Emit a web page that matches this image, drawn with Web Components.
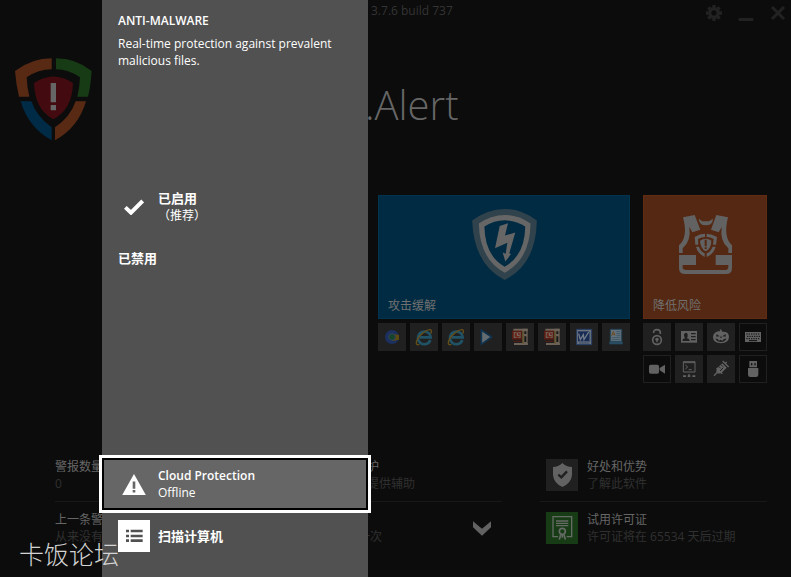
<!DOCTYPE html>
<html lang="zh-CN">
<head>
<meta charset="utf-8">
<meta name="viewport" content="width=device-width, initial-scale=1">
<title>Alert</title>
<style>
html, body { margin: 0; min-height: 100%; background: #0c0c0c; }
body { font: 12px/17px "Open Sans", "Noto Sans CJK SC", sans-serif; color: #646464; }
</style>
</head>
<body>
<alert-app></alert-app>
<script>
const ICONS = {
  logo: ['45 57 231 247', `<path fill="#582a14" d="M45 95Q95 57 155 57V90Q115 90 80 114Q81 145 88 172H57Q48 135 45 95ZM227 186H258Q235 265 165 303V264Q210 235 227 186Z"/><path fill="#173b15" d="M168 57Q228 57 275 95Q272 140 264 172H232Q239 145 240 114Q205 90 168 90Z"/><path fill="#002b46" d="M62 186H94Q110 232 155 264V303Q85 265 62 186Z"/><path fill="#430b10" d="M102 131Q160 92 219 131Q217 210 160 240Q104 210 102 131Z"/><path fill="#666" d="M152 131h16v58h-16zM152 197h16v16h-16z"/>`],
  gear: ['0 0 48 48', `<path fill="none" stroke="#222" stroke-width="10" d="M24 11a13 13 0 1 1-.1 0Z"/><path stroke="#222" stroke-width="10" d="M24 0v9M24 39v9M0 24h9M39 24h9M7 7l6 6M35 35l6 6M41 7l-6 6M13 35l-6 6"/>`],
  minimise: ['0 0 48 48', `<path fill="#222" d="M2 39h44v9H2z"/>`],
  close: ['0 0 48 48', `<path stroke="#222" stroke-width="9" d="M6 6l36 36M42 6L6 42"/>`],
  bolt: ['303 71 195 214', `<path fill="#30424c" d="M303 106Q350 71 401 71Q452 71 498 106Q496 238 401 285Q308 238 303 106Z"/><path fill="#666" d="M323 115Q360 89 401 89Q442 89 479 115Q478 222 401 263Q325 222 323 115Z"/><path fill="#002b42" d="M340 124Q370 105 401 105Q434 105 463 124Q462 211 401 245Q341 211 340 124Z"/><path fill="#666" d="M386 122L411 114L402 151L433 142L415 204L420 207L403 229L395 202L404 206L409 173L372 189Z"/>`],
  vest: ['126 90 159 177', `<g fill="#626262"><path d="M138 97L173 90L190 134L166 142L157 126Q163 169 137 190V204H126V181Q154 157 138 97ZM273 97L238 90L222 134L245 142L254 126Q248 169 274 190V204H285V181Q258 157 273 97Z"/><path d="M185 101L196 109H216L228 101Q227 121 206 121Q187 120 185 101ZM126 210H177V240H137V250Q139 255 148 255H263Q274 255 274 245V240H236V210H285V249Q285 267 267 267H144Q126 267 126 249Z"/><path d="M173 156Q188 146 204 146V156Q193 156 183 162L184 179H175ZM209 146Q226 147 240 156L237 179H228L230 162Q220 156 209 156ZM177 185H186Q190 199 203 205V216Q182 205 177 185ZM227 185H236Q230 207 209 216V205Q221 200 227 185Z"/><path d="M189 167Q207 155 223 167Q223 191 206 199Q190 190 189 167Z"/></g><path fill="#542813" d="M203 164h6v20h-6zM203 187h6v5h-6z"/>`],
  chrome: ['0 0 84 84', `<circle cx="42" cy="42" r="21" fill="#1c3060"/><path fill="#5d4a10" d="M44 32L63 36V50L43 54Z"/><circle cx="42" cy="42" r="10" fill="#14452b" stroke="#354259" stroke-width="3"/>`],
  ie: ['0 0 84 84', `<path d="M61 51A19 19 0 1 1 62 43H30" fill="none" stroke="#205266" stroke-width="8"/><path d="M28 64C17 69 16 58 24 46C33 32 52 18 61 20Q67 22 62 32" fill="none" stroke="#66501a" stroke-width="4"/>`],
  play: ['0 0 84 84', `<path d="M22 21L53 42L22 64Z" fill="#636c70" stroke="#12334d" stroke-width="5" stroke-linejoin="round"/>`],
  office: ['0 0 84 84', `<path fill="#6c6258" d="M22 17H65V24H22zM24 60H65V66H24z"/><path fill="#571c13" d="M18 23H48V50H18z"/><path fill="#6c6258" d="M49 17H65V66H49zM23 27H44V45H23z"/><circle cx="34" cy="36" r="8" fill="#6d271a"/><path d="M34 29v8h7" stroke="#777" stroke-width="3" fill="none"/><path fill="#191919" d="M55 25h6v8h-6zM55 40h6v17h-6z"/><path stroke="#571c13" stroke-width="3" d="M22 55H47"/><path stroke="#5e4e14" stroke-width="3" d="M51 24v38"/>`],
  word: ['0 0 84 84', `<path fill="#6b737d" stroke="#273d65" stroke-width="3" d="M20 19H65V65H20Z"/><path fill="#172b54" d="M24 25H57V55H24z"/><path fill="none" stroke="#737c89" stroke-width="4" d="M26 32l5 18 9-15 2 15 14-23"/><path stroke="#1c315c" stroke-width="2" d="M59 27v29M27 60h31"/>`],
  editor: ['0 0 84 84', `<path fill="#64717a" stroke="#24455a" stroke-width="3" d="M25 19H59V56H25Z"/><path fill="#284d63" d="M22 56H62V64H22z"/><path stroke="#684d23" stroke-width="3" fill="none" d="M29 38l5-13 5 13M31 34h6"/><path stroke="#2a4b60" stroke-width="2" d="M43 26h12M43 32h12M43 38h12M29 44h26M29 50h26"/>`],
  unlock: ['0 0 84 84', `<g fill="none" stroke="#626262" stroke-width="5"><circle cx="42" cy="51" r="13"/><path d="M32 30Q31 20 42 20Q52 20 52 30V33"/></g><circle cx="42" cy="49" r="5" fill="#626262"/><path fill="#626262" d="M40 49h4v9h-4z"/>`],
  card: ['0 0 84 84', `<path fill="#626262" d="M18 24h48v35H18z"/><path fill="#202020" d="M22 54Q22 47 30 46Q26 41 27 34Q32 25 38 33Q39 42 35 46Q44 47 44 54ZM48 30h14v4H48zM48 39h14v4H48zM48 48h14v4H48z"/>`],
  pumpkin: ['0 0 84 84', `<path fill="#626262" d="M40 24L38 18L43 20L46 26Q66 25 66 42Q65 60 42 61Q18 59 18 42Q19 25 40 24Z"/><path fill="#202020" d="M28 33l10 7-10 1zM56 33l-10 7 10 1zM42 38l3 6h-6zM25 46l8 3 3 4 5-3 5 3 4-4 9-3Q55 57 42 57Q28 57 25 46Z"/>`],
  keyboard: ['0 0 84 84', `<path fill="#626262" d="M18 27h48v30H18z"/><path stroke="#0c0c0c" stroke-width="3" stroke-dasharray="4 3" d="M22 33h41M24 40h39M22 47h41"/><path stroke="#0c0c0c" stroke-width="3" d="M30 53h24"/>`],
  camera: ['0 0 84 84', `<rect x="18" y="29" width="30" height="27" rx="5" fill="#626262"/><path fill="#626262" d="M50 39L66 29V56L50 46Z"/>`],
  terminal: ['0 0 84 84', `<path fill="none" stroke="#626262" stroke-width="3" d="M25 20h35v31H25zM25 23h35M31 30l7 6-7 6M41 44h9"/><path fill="#626262" d="M24 61h9v5h-9zM38 61h8v5h-8zM52 61h9v5h-9zM40 57h4v9h-4z"/>`],
  syringe: ['0 0 84 84', `<path fill="none" stroke="#626262" stroke-width="4" d="M47 18L65 36M54 26L59 21M31 52L21 62M29 39L46 56"/><path fill="#626262" d="M30 40L46 25L59 38L43 54Q35 57 30 54Q26 48 30 40Z"/><path stroke="#202020" stroke-width="3" d="M36 35l5 5M42 29l6 6M39 48l10-10"/>`],
  usb: ['0 0 84 84', `<path fill="#626262" d="M31 18h23v19H31zM27 39h31v20Q58 66 51 66H34Q27 66 27 59Z"/><path fill="#0c0c0c" d="M36 25h4v6h-4zM46 25h4v6h-4z"/>`],
  check: ['0 0 60 48', `<path d="M4 25L21 41L56 6" fill="none" stroke="#fff" stroke-width="12"/>`],
  warning: ['0 0 72 64', `<path fill="#fff" d="M36 0L72 64H0Z"/><path fill="#666" d="M32 23h8v22h-8zM32 49h8v7h-8z"/>`],
  list: ['0 0 96 96', `<path fill="#515151" d="M24 29h9v8h-9zM38 29h36v8H38zM24 44h9v8h-9zM38 44h36v8H38zM24 58h9v8h-9zM38 58h36v8H38z"/>`],
  chevron: ['0 0 54 44', `<path fill="#626262" d="M0 0L27 23L54 0V18L27 44L0 18Z"/>`],
  benefit: ['0 0 96 96', `<path fill="#626262" d="M49 12Q61 24 78 24V48Q76 72 49 84Q23 72 21 48V24Q37 24 49 12Z"/><path d="M37 47l9 8 17-18" fill="none" stroke="#202020" stroke-width="7"/>`],
  licence: ['0 0 96 96', `<path d="M36 74H21V14H77V74H62M30 27h37M30 34h37M30 41h37" fill="none" stroke="#656b65" stroke-width="4"/><circle cx="49" cy="58" r="9" fill="none" stroke="#656b65" stroke-width="5"/><path d="M44 67l-4 16M54 67l4 16M49 69v8" stroke="#656b65" stroke-width="5"/>`]
};

class HmIcon extends HTMLElement {
  constructor() {
    super();
    this.attachShadow({ mode: 'open' });
  }
  connectedCallback() {
    const [box, art] = ICONS[this.getAttribute('name')];
    this.shadowRoot.innerHTML = `<style>:host{display:block;flex:none}svg{display:block;width:100%;height:100%}</style><svg viewBox="${box}" aria-hidden="true">${art}</svg>`;
  }
}
customElements.define('hm-icon', HmIcon);

const define = (tag, html) => {
  const template = document.createElement('template');
  template.innerHTML = html;
  customElements.define(tag, class extends HTMLElement {
    constructor() {
      super();
      this.attachShadow({ mode: 'open' }).append(template.content.cloneNode(true));
    }
  });
};

define('title-bar', `
<style>
:host { display: flex; justify-content: space-between; align-items: flex-start; padding: 2px 5px 0 371px; color: #343434; }
nav { display: flex; gap: 16px; padding-top: 3px; }
button { all: unset; width: 16px; height: 16px; }
hm-icon { width: 16px; height: 16px; }
</style>
<slot></slot>
<nav>
<button aria-label="Settings"><hm-icon name="gear"></hm-icon></button>
<button aria-label="Minimise"><hm-icon name="minimise"></hm-icon></button>
<button aria-label="Close"><hm-icon name="close"></hm-icon></button>
</nav>`);

define('brand-row', `
<style>
:host { display: grid; grid-template-columns: 350px 1fr; align-items: end; padding-left: 15px; }
hm-icon { width: 77px; height: 83px; }
h1 { margin: 0; font-size: 40px; line-height: 72px; font-weight: 300; color: #666; }
</style>
<hm-icon name="logo"></hm-icon>
<h1><slot></slot></h1>`);

define('feature-tile', `
<style>
:host { display: block; }
button { all: unset; box-sizing: border-box; width: 100%; height: 124px; padding: 13px 9px 4px; display: flex; flex-direction: column; justify-content: space-between; background: var(--fill); border: 1px solid var(--edge); color: #707070; }
.art { display: flex; justify-content: center; }
</style>
<button><span class="art"><slot name="art"></slot></span><span><slot></slot></span></button>`);

class IconStrip extends HTMLElement {
  constructor() {
    super();
    this.attachShadow({ mode: 'open' });
  }
  connectedCallback() {
    const items = this.getAttribute('icons').split(' ').map(entry => {
      const off = entry.startsWith('-');
      const name = entry.replace('-', '');
      return `<button class="${off ? 'off' : ''}" aria-label="${name}"><hm-icon name="${name}"></hm-icon></button>`;
    }).join('');
    this.shadowRoot.innerHTML = `<style>
:host { display: flex; flex-wrap: wrap; gap: 4px; }
button { all: unset; box-sizing: border-box; width: 28px; height: 28px; background: #202020; }
.off { background: #0c0c0c; box-shadow: inset 0 0 0 1px #202020; }
hm-icon { width: 28px; height: 28px; }
</style>${items}`;
  }
}
customElements.define('icon-strip', IconStrip);

define('info-item', `
<style>
:host { display: flex; gap: 9px; height: 32px; white-space: nowrap; }
p { margin: 0; color: #666; }
.sub { color: #303030; }
.text { margin-top: -1px; }
</style>
<slot name="art"></slot>
<div class="text"><p><slot></slot></p><p class="sub"><slot name="sub"></slot></p></div>`);

define('side-panel', `
<style>
:host { position: absolute; top: 0; bottom: 0; left: 102px; width: 266px; display: flex; flex-direction: column; box-sizing: border-box; padding: 12px 0 25px; background: #515151; color: #fff; }
h2 { margin: 0; padding: 0 16px; font-size: 12px; line-height: 17px; font-weight: 600; }
p { margin: 0; padding: 6px 16px 0; }
button { all: unset; box-sizing: border-box; display: flex; align-items: center; padding: 0 16px; gap: 8px; }
strong { font-weight: 600; display: block; }
.cjk { font-weight: 700; font-size: 13px; }
.mark { width: 32px; display: flex; justify-content: center; }
.choices { margin-top: 121px; display: flex; flex-direction: column; gap: 26px; }
.check { width: 20px; height: 16px; }
.warn { width: 24px; height: 21px; }
.actions { margin-top: auto; display: flex; flex-direction: column; gap: 10px; }
.focus { height: 52px; padding: 0 14px; background: #666; border: 2px solid #000; outline: 3px solid #fff; }
.list { width: 32px; height: 32px; background: #fff; }
</style>
<h2>ANTI-MALWARE</h2>
<p>Real-time protection against prevalent malicious files.</p>
<div class="choices">
<button><span class="mark"><hm-icon class="check" name="check"></hm-icon></span><span><strong class="cjk">已启用</strong>（推荐）</span></button>
<button><strong class="cjk">已禁用</strong></button>
</div>
<div class="actions">
<button class="focus"><span class="mark"><hm-icon class="warn" name="warning"></hm-icon></span><span><strong>Cloud Protection</strong>Offline</span></button>
<button><hm-icon class="list" name="list"></hm-icon><strong class="cjk">扫描计算机</strong></button>
</div>`);

define('alert-app', `
<style>
:host { display: flex; flex-direction: column; position: relative; min-height: 100vh; overflow: hidden; background: #0c0c0c; }
title-bar { height: 56px; box-sizing: border-box; }
brand-row { height: 85px; }
.tiles { display: grid; grid-template-columns: minmax(0, 1fr) 124px; gap: 4px 13px; padding: 54px 24px 0 378px; }
.blue { --fill: #002b42; --edge: #00344f; }
.orange { --fill: #542813; --edge: #612c12; }
.bolt { width: 65px; height: 71px; }
.vest { width: 53px; height: 59px; margin-top: 6px; }
.info { margin-top: auto; padding: 0 24px 33px 55px; display: grid; grid-template-columns: 303px 144px 1fr; }
.col { display: flex; flex-direction: column; gap: 10px; }
hr { margin: 0; border: 0; height: 1px; background: #181818; }
.middle hr { width: 100%; }
.middle > info-item { padding-left: 9px; }
.right { margin-left: 38px; }
.right info-item { padding-left: 6px; }
.row { display: flex; justify-content: space-between; align-items: center; }
.row button { all: unset; padding-right: 11px; }
.chevron { width: 18px; height: 15px; }
.badge { width: 32px; height: 32px; background: #202020; }
.green { background: #173b15; }
.watermark { position: absolute; left: 19px; bottom: 5px; font-size: 25px; line-height: 36px; font-weight: 300; color: #d4d4d4; }
</style>
<title-bar>3.7.6 build 737</title-bar>
<brand-row>.Alert</brand-row>
<div class="tiles">
<feature-tile class="blue"><hm-icon slot="art" class="bolt" name="bolt"></hm-icon>攻击缓解</feature-tile>
<feature-tile class="orange"><hm-icon slot="art" class="vest" name="vest"></hm-icon>降低风险</feature-tile>
<icon-strip icons="chrome ie ie play office office word editor"></icon-strip>
<icon-strip icons="unlock card pumpkin -keyboard -camera terminal syringe -usb"></icon-strip>
</div>
<div class="info">
<div class="col"><info-item>警报数量<span slot="sub">0</span></info-item><hr><info-item>上一条警<span slot="sub">从来没有</span></info-item></div>
<div class="col middle"><info-item>护<span slot="sub">提供辅助</span></info-item><hr><div class="row"><info-item>&nbsp;<span slot="sub">一次</span></info-item><button aria-label="More"><hm-icon class="chevron" name="chevron"></hm-icon></button></div></div>
<div class="col right"><info-item><hm-icon slot="art" class="badge" name="benefit"></hm-icon>好处和优势<span slot="sub">了解此软件</span></info-item><hr><info-item><hm-icon slot="art" class="badge green" name="licence"></hm-icon>试用许可证<span slot="sub">许可证将在 65534 天后过期</span></info-item></div>
</div>
<side-panel></side-panel>
<div class="watermark">卡饭论坛</div>`);
</script>
</body>
</html>
